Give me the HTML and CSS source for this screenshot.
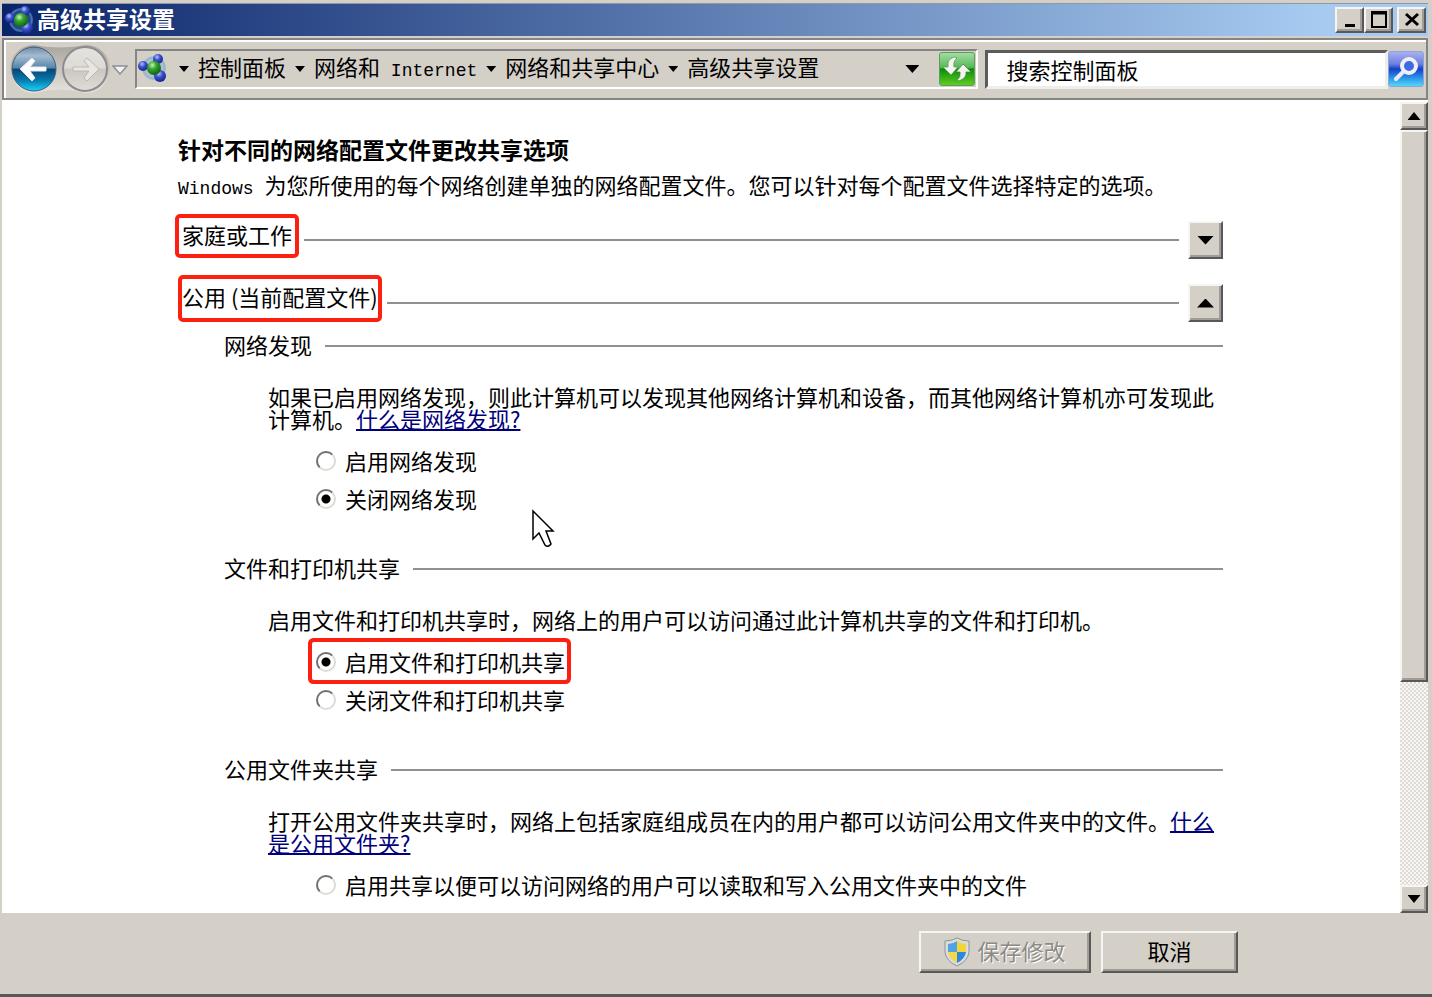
FILE: index.html
```html
<!DOCTYPE html>
<html lang="zh-CN">
<head>
    <meta charset="UTF-8">
    <meta name="viewport" content="width=device-width, initial-scale=1.0">
    <title>高级共享设置</title>
    <link rel="stylesheet" href="styles.css">
</head>
<body>

    <!-- Shared icon -->
    <svg class="defs" aria-hidden="true">
        <defs>
            <radialGradient id="blueBall" cx="40%" cy="30%" r="70%">
                <stop offset="0" stop-color="#b4c4ff"/>
                <stop offset="0.45" stop-color="#3c50cc"/>
                <stop offset="1" stop-color="#182488"/>
            </radialGradient>
            <radialGradient id="greenBall" cx="38%" cy="30%" r="75%">
                <stop offset="0" stop-color="#c8f4b8"/>
                <stop offset="0.4" stop-color="#34a42c"/>
                <stop offset="1" stop-color="#0a5c10"/>
            </radialGradient>
            <symbol id="network" viewBox="0 0 30 30">
                <circle cx="16" cy="15" r="11" fill="#5c9cd4" fill-opacity="0.3" stroke="#6ca8dc" stroke-opacity="0.5" stroke-width="2"/>
                <circle cx="20" cy="6" r="5" fill="url(#blueBall)"/>
                <circle cx="5" cy="13" r="5" fill="url(#blueBall)"/>
                <circle cx="22" cy="23" r="6" fill="url(#blueBall)"/>
                <circle cx="16" cy="15" r="7" fill="url(#greenBall)"/>
            </symbol>
        </defs>
    </svg>

    <div class="window">
        <header class="titlebar">
            <svg class="title-icon"><use href="#network"/></svg>
            <h1>高级共享设置</h1>
            <div class="window-buttons">
                <button class="raised" aria-label="最小化"><svg width="20" height="18"><path d="M5 14.5h10" stroke="#000" stroke-width="3"/></svg></button>
                <button class="raised" aria-label="最大化"><svg width="20" height="18"><path d="M3 1h14v15H3z" fill="none" stroke="#000" stroke-width="2"/><path d="M2 2h16" stroke="#000" stroke-width="3"/></svg></button>
                <button class="raised close" aria-label="关闭"><svg width="20" height="18"><path d="M4 3l12 11M16 3L4 14" stroke="#000" stroke-width="3"/></svg></button>
            </div>
        </header>

        <div class="toolbar">
            <div class="history">
                <svg width="104" height="50" viewBox="0 0 104 50">
                    <defs>
                        <linearGradient id="back" x1="0" y1="0" x2="0" y2="1">
                            <stop offset="0" stop-color="#6f8ba6"/>
                            <stop offset="0.2" stop-color="#a4bcd0"/>
                            <stop offset="0.48" stop-color="#5484a8"/>
                            <stop offset="0.5" stop-color="#064674"/>
                            <stop offset="0.75" stop-color="#0878ac"/>
                            <stop offset="1" stop-color="#18d4fc"/>
                        </linearGradient>
                        <linearGradient id="forward" x1="0" y1="0" x2="0" y2="1">
                            <stop offset="0" stop-color="#e4e2de"/>
                            <stop offset="0.48" stop-color="#dedbd6"/>
                            <stop offset="0.5" stop-color="#cbc7c0"/>
                            <stop offset="1" stop-color="#e0ddd6"/>
                        </linearGradient>
                        <linearGradient id="bridge" x1="0" y1="0" x2="0" y2="1">
                            <stop offset="0" stop-color="#a8a49e"/>
                            <stop offset="0.5" stop-color="#c8c4bd"/>
                            <stop offset="1" stop-color="#e6e4df"/>
                        </linearGradient>
                    </defs>
                    <path d="M26 1Q52 6 78 1A24 24 0 0 1 78 49Q52 42 26 49A24 24 0 0 1 26 1Z" fill="url(#bridge)"/>
                    <circle cx="26" cy="25" r="22" fill="url(#back)" stroke="#3c5c7c" stroke-width="1"/>
                    <circle cx="77" cy="25" r="22" fill="url(#forward)" stroke="#8c8c90" stroke-width="2"/>
                    <path d="M12 25L24 14L27 17L22 23H38V27H22L27 34L24 37Z" fill="#fff" stroke="#e4e8ec" stroke-linejoin="round"/>
                    <path d="M91 25L79 14L76 17L81 23H65V27H81L76 34L79 37Z" fill="#e9e6e2" stroke="#bcb8b2" stroke-linejoin="round"/>
                </svg>
                <svg width="16" height="12" viewBox="0 0 16 12"><path d="M1 3h14L8 11Z" fill="#f2f2f2" stroke="#8c9094" stroke-width="1.5"/></svg>
            </div>

            <nav class="address">
                <svg class="address-icon"><use href="#network"/></svg>
                <i class="arrow"></i>
                <a href="#">控制面板</a>
                <i class="arrow"></i>
                <a href="#">网络和<span class="latin"> Internet</span></a>
                <i class="arrow"></i>
                <a href="#">网络和共享中心</a>
                <i class="arrow"></i>
                <a href="#">高级共享设置</a>
                <i class="arrow drop"></i>
                <button class="refresh" aria-label="刷新">
                    <svg width="34" height="32" viewBox="0 0 34 32">
                        <path d="M14 4Q7 6 8 14H3L11 22L18 14H14Q13 8 17 5Z" fill="#f4f4f0" stroke="#5c9c5c" stroke-width="0.8"/>
                        <path d="M19 28Q27 25 26 19H31L23 11L16 19H20Q21 24 17 27Z" fill="#f4f4f0" stroke="#3c8c3c" stroke-width="0.8"/>
                    </svg>
                </button>
            </nav>

            <div class="search">
                <input type="text" placeholder="搜索控制面板" aria-label="搜索控制面板">
                <button class="search-button" aria-label="搜索">
                    <svg width="32" height="32" viewBox="0 0 32 32">
                        <path d="M6 26L14 18" stroke="#e8ecf4" stroke-width="4" stroke-linecap="round"/>
                        <circle cx="19" cy="13" r="7" fill="#3c6ce0" stroke="#f0f0f4" stroke-width="4"/>
                    </svg>
                </button>
            </div>
        </div>

        <div class="body">
            <main>
                <h2>针对不同的网络配置文件更改共享选项</h2>
                <p class="intro"><span class="latin">Windows </span>为您所使用的每个网络创建单独的网络配置文件。您可以针对每个配置文件选择特定的选项。</p>

                <div class="profile">
                    <span class="profile-name home">家庭或工作</span>
                    <span class="rule"></span>
                    <button class="raised toggle" aria-label="展开"><i class="arrow large"></i></button>
                </div>
                <div class="profile current">
                    <span class="profile-name public">公用 (当前配置文件)</span>
                    <span class="rule"></span>
                    <button class="raised toggle" aria-label="折叠"><i class="arrow large up"></i></button>
                </div>

                <section>
                    <h3>网络发现</h3>
                    <p>如果已启用网络发现，则此计算机可以发现其他网络计算机和设备，而其他网络计算机亦可发现此<br>计算机。<a href="#">什么是网络发现?</a></p>
                    <div class="options">
                        <label><input type="radio" name="discovery">启用网络发现</label>
                        <label><input type="radio" name="discovery" checked>关闭网络发现</label>
                    </div>
                </section>

                <section>
                    <h3>文件和打印机共享</h3>
                    <p>启用文件和打印机共享时，网络上的用户可以访问通过此计算机共享的文件和打印机。</p>
                    <div class="options">
                        <label class="marked"><input type="radio" name="printer" checked>启用文件和打印机共享</label>
                        <label><input type="radio" name="printer">关闭文件和打印机共享</label>
                    </div>
                </section>

                <section>
                    <h3>公用文件夹共享</h3>
                    <p>打开公用文件夹共享时，网络上包括家庭组成员在内的用户都可以访问公用文件夹中的文件。<a href="#">什么<br>是公用文件夹?</a></p>
                    <div class="options">
                        <label><input type="radio" name="folder">启用共享以便可以访问网络的用户可以读取和写入公用文件夹中的文件</label>
                    </div>
                </section>

                <svg class="pointer" width="24" height="40" viewBox="0 0 24 40"><path d="M2 2V30L8 24L14 36Q17 39 20 35L15 22H22Z" fill="#fff" stroke="#000" stroke-width="1.5"/></svg>
            </main>

            <div class="scrollbar">
                <button class="raised" aria-label="向上滚动"><i class="arrow scroll up"></i></button>
                <div class="raised thumb"></div>
                <div class="track"></div>
                <button class="raised" aria-label="向下滚动"><i class="arrow scroll"></i></button>
            </div>
        </div>

        <footer>
            <button class="raised save" disabled>
                <svg width="26" height="30" viewBox="0 0 26 30">
                    <path d="M13 1Q18 4 25 4V15Q24 24 13 29Q2 24 1 15V4Q8 4 13 1Z" fill="#dcdcdc" stroke="#8c9498"/>
                    <path d="M13 4V15H4V7Q9 7 13 4Z" fill="#4ca4e4"/>
                    <path d="M13 4V15H22V7Q17 7 13 4Z" fill="#f4d43c"/>
                    <path d="M4 15H13V26Q5 22 4 15Z" fill="#f4d84c"/>
                    <path d="M22 15H13V26Q21 22 22 15Z" fill="#2c88dc"/>
                </svg>
                <span>保存修改</span>
            </button>
            <button class="raised cancel"><span>取消</span></button>
        </footer>
    </div>

</body>
</html>
```
FILE: styles.css
```css
* {
    box-sizing: border-box;
}
body {
    margin: 0;
    background: #d4d0c8;
    color: #000;
    font-family: "Noto Sans CJK SC", sans-serif;
    font-size: 22px;
    line-height: 22px;
}
button,
input {
    font: inherit;
    color: inherit;
    margin: 0;
    padding: 0;
}
h1,
h2,
h3,
p {
    margin: 0;
}
svg {
    flex: none;
}
.defs {
    position: absolute;
    width: 0;
    height: 0;
}
.latin {
    font-family: "Liberation Mono", monospace;
    font-size: 18px;
    line-height: 0;
    white-space: pre;
}
.window {
    display: flex;
    flex-direction: column;
    min-height: 100vh;
    padding: 3px 4px 0 2px;
    border-bottom: 3px solid #58585a;
}

/* grey 3d edges */
.raised {
    display: flex;
    align-items: center;
    justify-content: center;
    background: #d4d0c8;
    border: 2px solid;
    border-color: #f6f5f2 #58585a #58585a #f6f5f2;
    box-shadow: inset -2px -2px 0 #a09d97;
}

/* title bar */
.titlebar {
    display: flex;
    align-items: center;
    height: 33px;
    padding: 0 2px 0 3px;
    background: linear-gradient(to right, #0a246a, #a6caf0 92%);
    border-top: 1px solid #9098a8;
}
.title-icon {
    width: 30px;
    height: 30px;
    margin-right: 2px;
}
h1 {
    color: #fff;
    font-size: 23px;
    line-height: 28px;
    padding-bottom: 4px;
}
.window-buttons {
    display: flex;
    margin-left: auto;
}
.window-buttons button {
    width: 29px;
    height: 26px;
}
.window-buttons .close {
    margin-left: 4px;
}

/* toolbar */
.toolbar {
    display: flex;
    align-items: center;
    height: 62px;
    margin-top: 2px;
    padding: 0 2px 0 4px;
    border: 2px solid #858585;
    box-shadow: inset 2px 2px 0 #fff;
}
.history {
    display: flex;
    align-items: center;
    width: 125px;
    margin-right: 2px;
}
.address {
    display: flex;
    flex: 841;
    align-items: center;
    height: 40px;
    padding-left: 1px;
    border: 2px solid;
    border-color: #858585 #fff #fff #858585;
}
.address a {
    color: #000;
    text-decoration: none;
    white-space: nowrap;
    padding-bottom: 6px;
}
.address-icon {
    width: 30px;
    height: 30px;
    margin: 0 2px 3px 0;
}
.arrow {
    flex: none;
    width: 10px;
    height: 6px;
    margin: 0 9px;
    background: #000;
    clip-path: polygon(0 0, 100% 0, 50% 100%);
}
.arrow.up {
    clip-path: polygon(50% 0, 100% 100%, 0 100%);
}
.arrow.large {
    width: 17px;
    height: 9px;
    margin: 0;
}
.arrow.scroll {
    width: 13px;
    height: 8px;
    margin: 0;
}
.arrow.drop {
    width: 14px;
    height: 8px;
    margin: 0 20px 0 auto;
}
.refresh {
    width: 36px;
    height: 34px;
    margin-right: 1px;
    border: 1px solid #5c9c5c;
    border-radius: 3px;
    background: linear-gradient(#a4dca4, #58b858 45%, #088c08 50%, #60cc20);
}
.search {
    display: flex;
    flex: 440;
    align-items: center;
    margin-left: 7px;
}
.search input {
    flex: 1;
    min-width: 0;
    height: 39px;
    padding: 0 18px;
    background: #fff;
    border: 3px solid;
    border-color: #5c5c5c #f0eeea #f0eeea #5c5c5c;
    border-radius: 0;
}
.search input::placeholder {
    color: #000;
    opacity: 1;
}
.search-button {
    width: 36px;
    height: 36px;
    border: 1px solid #8ca4d8;
    border-radius: 3px;
    background: linear-gradient(#a8b0f0, #6c80e0 35%, #1440c8 50%, #2c90e8 75%, #50d8f8);
}
.refresh svg,
.search-button svg {
    display: block;
    margin: auto;
}

/* content */
.body {
    display: flex;
    flex: 1;
    background: #fff;
}
main {
    position: relative;
    flex: 1;
    padding: 34px 177px 8px 173px;
}
h2 {
    padding-left: 3px;
    font-size: 23px;
    line-height: 30px;
}
.intro {
    padding-left: 3px;
    margin: 9px 0 19px;
    white-space: nowrap;
}
.profile {
    display: flex;
    align-items: center;
    height: 52px;
}
.profile.current {
    height: 56px;
    margin-top: 9px;
}
.profile-name {
    align-self: flex-start;
    border: 4px solid #fc2010;
    border-radius: 5px;
}
.home {
    padding: 5px 3px 9px;
}
.public {
    margin-left: 3px;
    padding: 6px 0 11px;
}
.rule {
    flex: 1;
    height: 2px;
    margin: 0 9px 0 5px;
    background: #909090;
}
.toggle {
    width: 35px;
    height: 38px;
}
section {
    padding-left: 49px;
    margin-bottom: 37px;
}
section:last-of-type {
    margin-bottom: 0;
}
h3 {
    display: flex;
    align-items: center;
    font-size: 22px;
    font-weight: normal;
    line-height: 26px;
    margin-bottom: 28px;
}
h3::after {
    content: "";
    flex: 1;
    height: 2px;
    margin: 4px 0 0 13px;
    background: #909090;
}
section p {
    padding-left: 44px;
    white-space: nowrap;
}
section a {
    color: #00007c;
    text-decoration-thickness: 2px;
}
.options {
    display: flex;
    flex-direction: column;
    align-items: flex-start;
    margin-top: 12px;
    padding-left: 88px;
}
label {
    display: flex;
    align-items: center;
    height: 38px;
    padding: 0 2px 0 4px;
}
.marked {
    border-radius: 2px;
    box-shadow: 0 0 0 4px #fc2010;
}
input[type="radio"] {
    appearance: none;
    width: 20px;
    height: 20px;
    margin: 2px 9px 0 0;
    border: 2px solid;
    border-color: #707070 #dedbd4 #dedbd4 #707070;
    border-radius: 50%;
}
input[type="radio"]:checked {
    background: radial-gradient(circle, #000 4px, transparent 5px);
}
.pointer {
    position: absolute;
    left: 529px;
    top: 409px;
}

/* scrollbar */
.scrollbar {
    display: flex;
    flex-direction: column;
    width: 28px;
    padding-top: 2px;
}
.scrollbar button {
    height: 28px;
}
.thumb {
    flex: 27;
}
.track {
    flex: 10;
    background: repeating-conic-gradient(#dedbd5 0 25%, #f8f7f5 0 50%) 0 0 / 4px 4px;
}

/* footer */
footer {
    display: flex;
    justify-content: flex-end;
    gap: 10px;
    height: 81px;
    padding: 18px 190px 0 0;
}
footer button {
    height: 42px;
}
footer span {
    padding-bottom: 4px;
}
.save {
    width: 172px;
    gap: 7px;
}
.save:disabled {
    color: #8c8a86;
    text-shadow: 1px 1px 0 #fff;
}
.cancel {
    width: 137px;
}
```
